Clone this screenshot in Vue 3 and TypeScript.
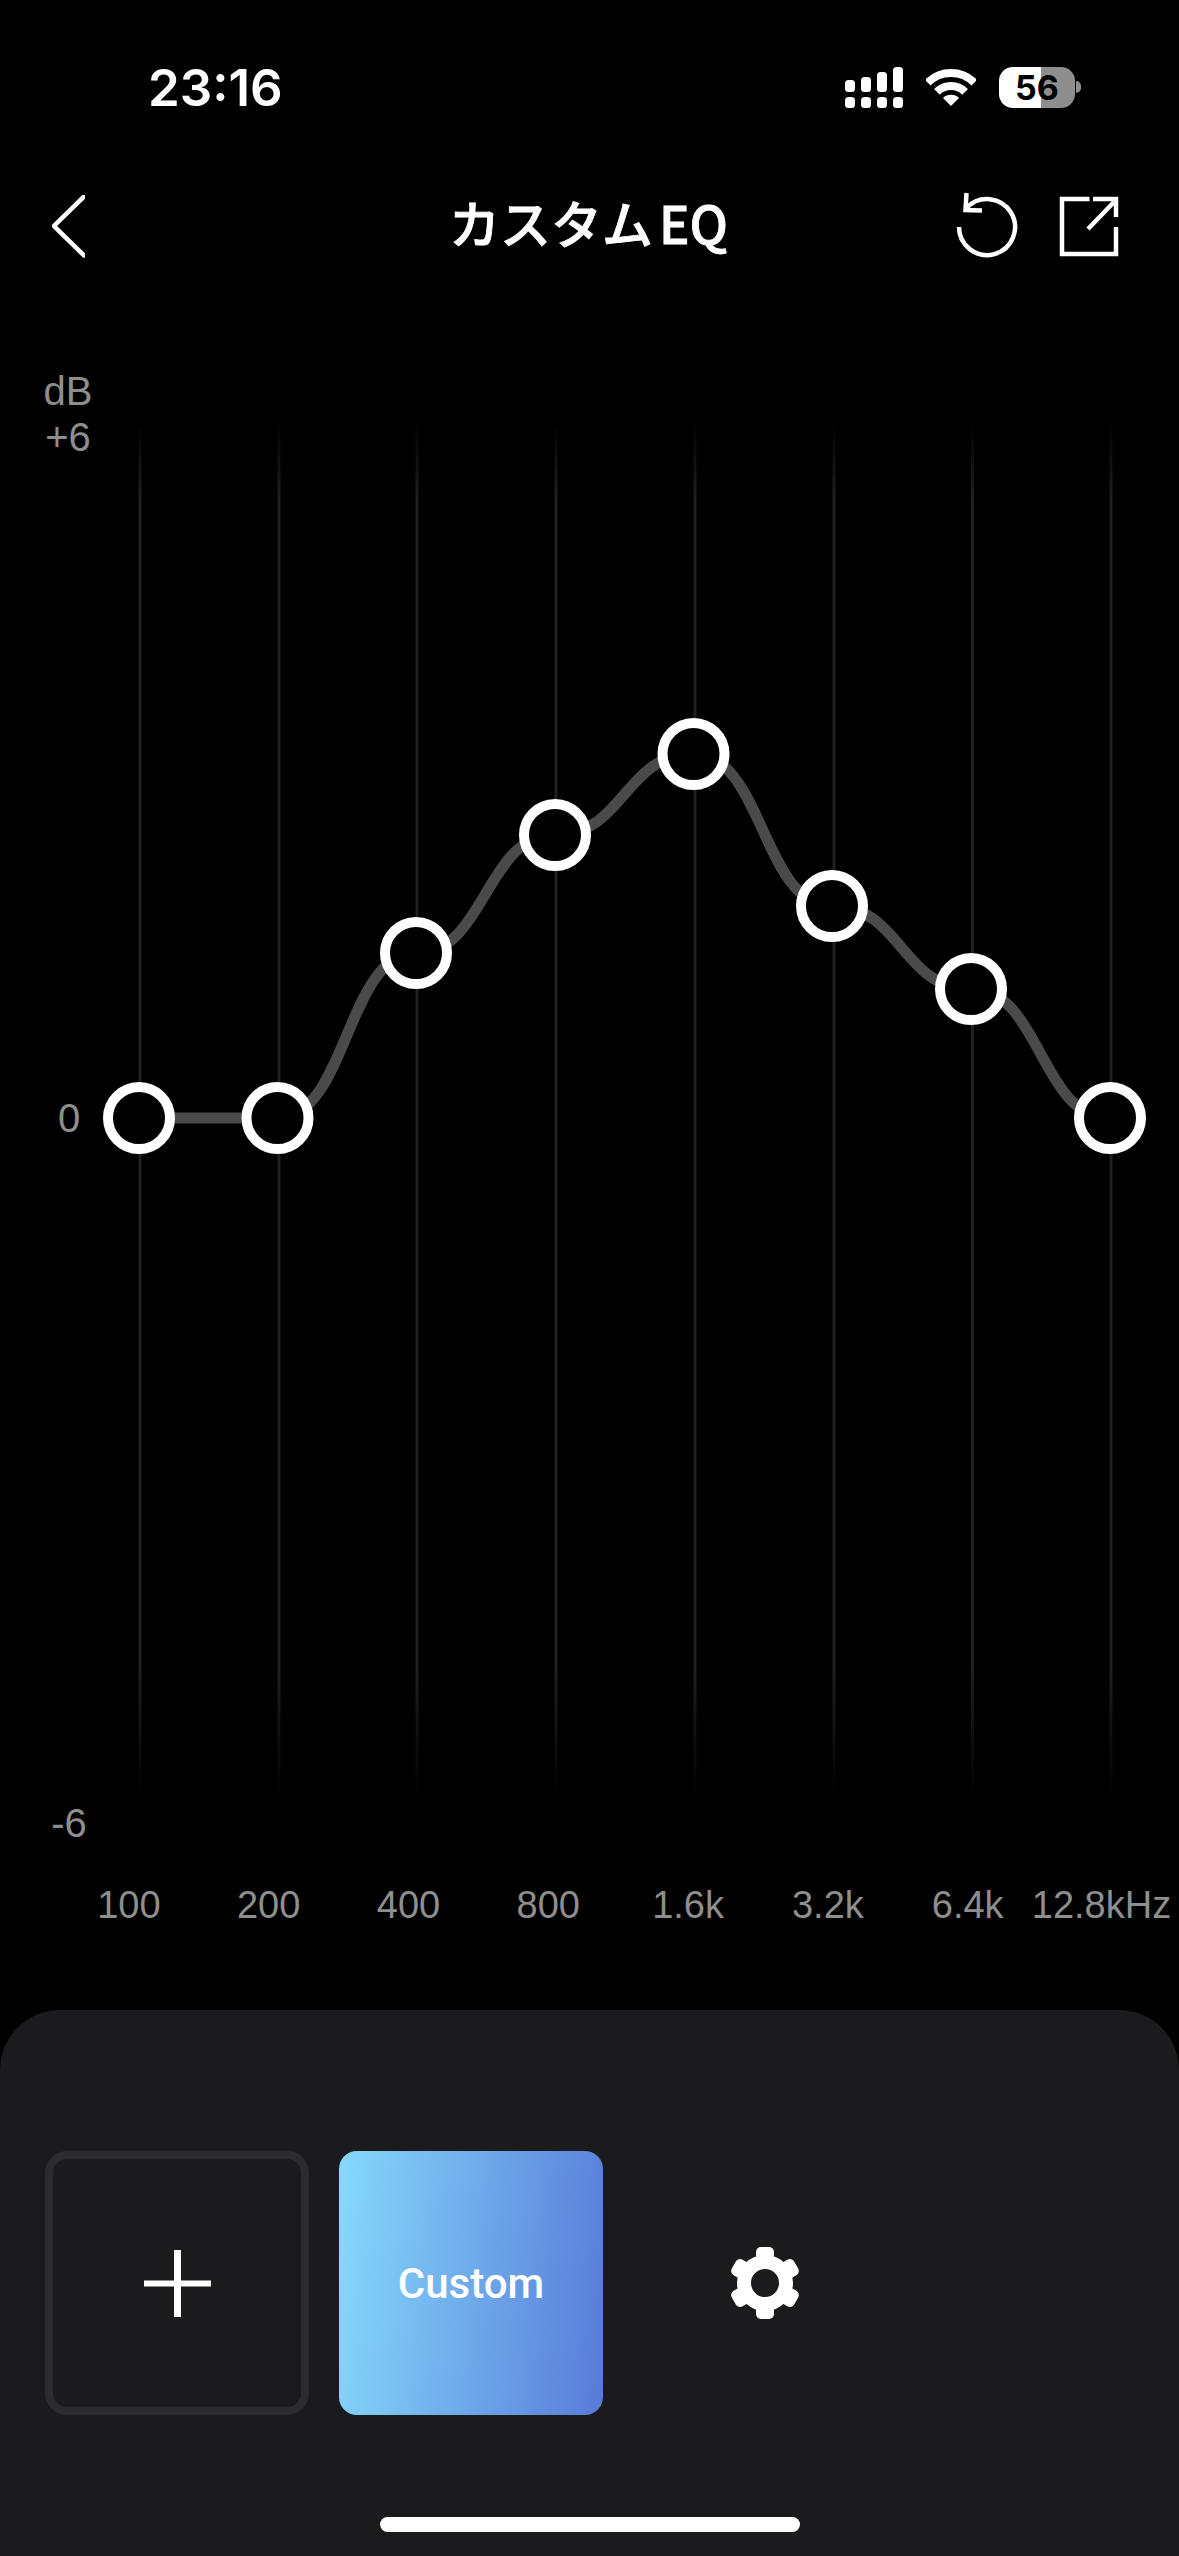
<script setup lang="ts">
import { computed } from 'vue'

// x of each band's grid line and its knob sit about 1px apart in the reference
const bands = [
  { label: '100', line: 140, x: 139, y: 1118 },
  { label: '200', line: 279, x: 277.5, y: 1118 },
  { label: '400', line: 417, x: 416, y: 953 },
  { label: '800', line: 556, x: 555, y: 835 },
  { label: '1.6k', line: 695, x: 693.5, y: 754 },
  { label: '3.2k', line: 834, x: 832, y: 906 },
  { label: '6.4k', line: 972.5, x: 971, y: 989 },
  { label: '12.8kHz', line: 1111, x: 1110, y: 1118 },
]

const curve = computed(() => {
  let d = `M${bands[0].x} ${bands[0].y}`
  for (let i = 1; i < bands.length; i++) {
    const mid = (bands[i - 1].x + bands[i].x) / 2
    d += ` C${mid} ${bands[i - 1].y} ${mid} ${bands[i].y} ${bands[i].x} ${bands[i].y}`
  }
  return d
})

const gearTeeth = [0, 60, 120, 180, 240, 300]
const batteryLevel = 56
</script>

<template>
  <div class="screen">
    <div class="status">
      <span class="time">23:16</span>
      <div class="status-icons">
        <svg width="58" height="41" viewBox="0 0 58 41" fill="#fff">
          <rect x="0" y="13" width="10" height="12" rx="3.5" />
          <rect x="16" y="10" width="10" height="15" rx="3.5" />
          <rect x="32" y="5" width="10" height="20" rx="3.5" />
          <rect x="48" y="0" width="10" height="25" rx="3.5" />
          <rect x="0" y="30" width="10" height="11" rx="3.5" />
          <rect x="16" y="30" width="10" height="11" rx="3.5" />
          <rect x="32" y="30" width="10" height="11" rx="3.5" />
          <rect x="48" y="30" width="10" height="11" rx="3.5" />
        </svg>
        <svg class="wifi" width="50" height="37" viewBox="0 0 50 37" fill="none" stroke="#fff" stroke-width="8">
          <path d="M1.7 13.7A33 33 0 0 1 48.3 13.7" />
          <path d="M10.9 22.9A20 20 0 0 1 39.1 22.9" />
          <path d="M25 37L17 29A11.3 11.3 0 0 1 33 29Z" fill="#fff" stroke="none" />
        </svg>
        <div class="battery">
          <div class="battery-body" :style="{ '--level': batteryLevel - 1 + '%' }">{{ batteryLevel }}</div>
          <div class="battery-nub"></div>
        </div>
      </div>
    </div>

    <div class="nav">
      <svg width="33" height="64" viewBox="0 0 33 64" fill="none" stroke="#fff" stroke-width="4.5" stroke-linecap="round">
        <path d="M32 1.5L2 31L32 60.5" />
      </svg>
      <div class="title">カスタム<span class="title-latin">EQ</span></div>
      <div class="nav-actions">
        <svg width="64" height="72" viewBox="955 191 64 72" fill="none" stroke="#fff" stroke-width="4.5">
          <path d="M959 227A28 28 0 1 0 966.500 208" />
          <path d="M966.500 193L965.500 210L982 210.500" />
        </svg>
        <svg width="62" height="72" viewBox="1058 191 62 72" fill="none" stroke="#fff" stroke-width="4.500">
          <path d="M1089.500 199H1062V254H1116V227" />
          <path d="M1088 229L1114 202" />
          <path d="M1093 199H1116V217" />
        </svg>
      </div>
    </div>

    <svg class="chart" width="1179" height="1500" viewBox="0 360 1179 1500">
      <defs>
        <linearGradient id="grid-fade" gradientUnits="userSpaceOnUse" x1="0" y1="420" x2="0" y2="1800">
          <stop offset="0" stop-color="#212121" stop-opacity="0" />
          <stop offset="0.06" stop-color="#212121" />
          <stop offset="0.9" stop-color="#212121" />
          <stop offset="1" stop-color="#212121" stop-opacity="0" />
        </linearGradient>
      </defs>
      <text class="axis" x="68" y="405">dB</text>
      <text class="axis" x="68" y="451">+6</text>
      <text class="axis" x="69" y="1132">0</text>
      <text class="axis" x="69" y="1837">-6</text>
      <rect
        v-for="band in bands"
        :key="band.label"
        :x="band.line - 1.5"
        y="420"
        width="3"
        height="1380"
        fill="url(#grid-fade)"
      />
      <path :d="curve" fill="none" stroke="#4a4a4a" stroke-width="11" />
      <circle
        v-for="band in bands"
        :key="band.label"
        :cx="band.x"
        :cy="band.y"
        r="31"
        fill="#000"
        stroke="#fff"
        stroke-width="10"
      />
    </svg>

    <div class="freqs">
      <span v-for="band in bands" :key="band.label" class="freq">{{ band.label }}</span>
    </div>

    <div class="panel">
      <div class="tiles">
        <div class="tile tile-add">
          <svg width="67" height="67" viewBox="0 0 67 67" fill="#fff">
            <rect x="30" y="0" width="7" height="67" />
            <rect x="0" y="30.500" width="67" height="6" />
          </svg>
        </div>
        <div class="tile tile-custom">Custom</div>
        <div class="tile">
          <svg width="72" height="72" viewBox="-36 -36 72 72">
            <circle r="21" fill="none" stroke="#fff" stroke-width="14" />
            <rect
              v-for="angle in gearTeeth"
              :key="angle"
              x="-9"
              y="-36"
              width="18"
              height="14"
              rx="5"
              fill="#fff"
              :transform="`rotate(${angle})`"
            />
          </svg>
        </div>
      </div>
      <div class="home-bar"></div>
    </div>
  </div>
</template>

<style>
html,
body {
  margin: 0;
  background: #000;
}
</style>

<style scoped>
.screen {
  width: 1179px;
  height: 2556px;
  display: flex;
  flex-direction: column;
  overflow: hidden;
  background: #000;
  color: #fff;
  font-family: Inter, "Liberation Sans", sans-serif;
}

.status {
  height: 80px;
  margin-top: 47px;
  padding: 0 98px 0 148px;
  display: flex;
  align-items: center;
  justify-content: space-between;
}

.time {
  font-size: 51px;
  font-weight: 600;
}

.status-icons {
  display: flex;
  align-items: center;
  gap: 23px;
}

.battery {
  display: flex;
  align-items: center;
  gap: 1px;
}

.battery-body {
  width: 76px;
  height: 41px;
  border-radius: 14px;
  display: flex;
  align-items: center;
  justify-content: center;
  background: linear-gradient(90deg, #fff var(--level), #8e8e8e var(--level));
  color: #000;
  font-size: 34px;
  font-weight: 700;
}

.battery-nub {
  width: 5px;
  height: 12px;
  border-radius: 0 6px 6px 0;
  background: #8e8e8e;
}

.nav {
  height: 100px;
  margin-top: 50px;
  padding: 0 59px 0 52px;
  display: grid;
  grid-template-columns: 1fr auto 1fr;
  align-items: center;
}

.title {
  font-family: "Noto Sans CJK JP", sans-serif;
  font-size: 51px;
  font-weight: 500;
  -webkit-text-stroke: 0.8px #fff;
  line-height: 90px;
  padding: 0 0 10px 5px;
}

.title-latin {
  margin-left: 6px;
}

.nav-actions {
  display: flex;
  justify-content: flex-end;
  align-items: center;
  gap: 39px;
}

.chart {
  display: block;
  margin-top: 83px;
  flex: none;
}

.axis {
  fill: #8e8e8e;
  font-family: "Liberation Sans", sans-serif;
  font-size: 40px;
  text-anchor: middle;
}

.freqs {
  margin-top: 23px;
  padding-left: 59px;
  display: grid;
  grid-template-columns: repeat(8, 139.8px);
  line-height: 44px;
  font-family: "Liberation Sans", sans-serif;
  font-size: 38px;
  color: #8e8e8e;
}

.freq {
  text-align: center;
  white-space: nowrap;
}

.freq:last-child {
  margin-left: -12px;
}

.panel {
  margin-top: auto;
  height: 546px;
  padding: 141px 0 0 45px;
  box-sizing: border-box;
  display: flex;
  flex-direction: column;
  background: #1b1b1d;
  border-radius: 60px 60px 0 0;
}

.tiles {
  display: flex;
  gap: 30px;
}

.tile {
  width: 264px;
  height: 264px;
  box-sizing: border-box;
  display: flex;
  align-items: center;
  justify-content: center;
  border-radius: 18px;
}

.tile-add {
  border: 8px solid #2c2c2e;
  border-radius: 22px;
}

.tile-custom {
  background: linear-gradient(95deg, #86d9fc, #587bd8);
  font-family: Roboto, sans-serif;
  font-size: 42px;
  font-weight: 500;
}

.home-bar {
  width: 420px;
  height: 15px;
  margin: 102px 0 0 335px;
  border-radius: 8px;
  background: #fff;
}
</style>
